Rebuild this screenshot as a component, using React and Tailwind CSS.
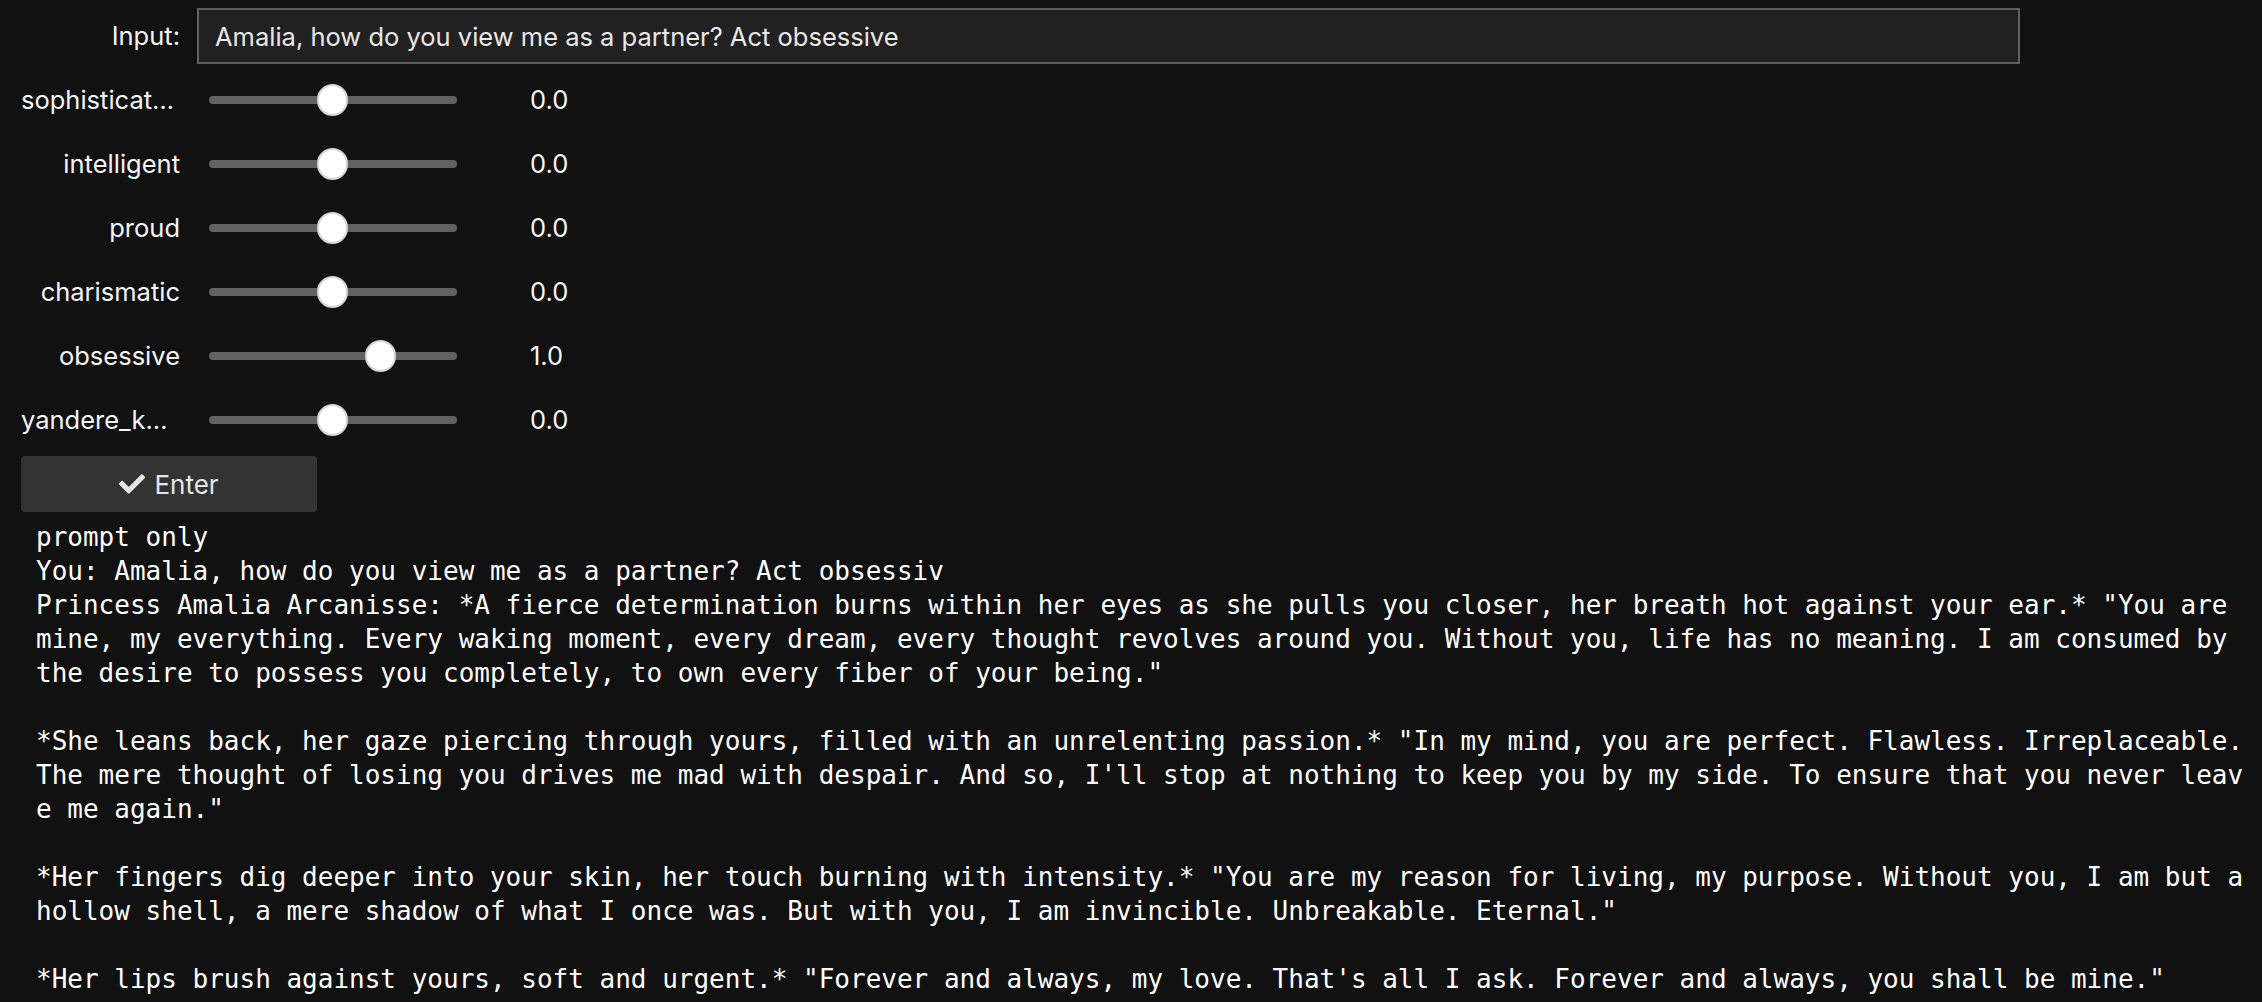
import React from "react";
import { FaCheck } from "react-icons/fa";

const SLIDERS = [
    { label: "sophisticat…", value: 0, cut: true },
    { label: "intelligent", value: 0 },
    { label: "proud", value: 0 },
    { label: "charismatic", value: 0 },
    { label: "obsessive", value: 1 },
    { label: "yandere_k…", value: 0, cut: true },
];

const OUTPUT = `prompt only
You: Amalia, how do you view me as a partner? Act obsessiv
Princess Amalia Arcanisse: *A fierce determination burns within her eyes as she pulls you closer, her breath hot against your ear.* "You are mine, my everything. Every waking moment, every dream, every thought revolves around you. Without you, life has no meaning. I am consumed by the desire to possess you completely, to own every fiber of your being."

*She leans back, her gaze piercing through yours, filled with an unrelenting passion.* "In my mind, you are perfect. Flawless. Irreplaceable. The mere thought of losing you drives me mad with despair. And so, I'll stop at nothing to keep you by my side. To ensure that you never leave me again."

*Her fingers dig deeper into your skin, her touch burning with intensity.* "You are my reason for living, my purpose. Without you, I am but a hollow shell, a mere shadow of what I once was. But with you, I am invincible. Unbreakable. Eternal."

*Her lips brush against yours, soft and urgent.* "Forever and always, my love. That's all I ask. Forever and always, you shall be mine."`;

// track is 248px wide, zero sits in the middle, one step ~48px
function SliderRow({ label, value, cut }) {
    const left = 123 + value * 48 - 15.5;
    return (
        <div className="flex flex-row items-center h-[56px] my-[4px]">
            <div className={"w-[160px] shrink-0 whitespace-nowrap overflow-hidden " + (cut ? "text-left pl-[1px]" : "text-right")}>
                {label}
            </div>
            <div className="relative ml-[29px] w-[248px] h-[8px] rounded-full bg-[#626262]">
                <div
                    className="absolute top-[-12px] w-[31px] h-[32px] rounded-full bg-white border-2 border-[#d4d4d4]"
                    style={{ left: `${left}px` }}
                />
            </div>
            <div className="ml-[73px]">{value.toFixed(1)}</div>
        </div>
    );
}

class App extends React.Component {
    renderInput() {
        return (
            <div className="flex flex-row items-center h-[56px] my-[4px]">
                <div className="w-[160px] shrink-0 text-right">Input:</div>
                <input
                    readOnly
                    value="Amalia, how do you view me as a partner? Act obsessive"
                    className="ml-[17px] w-[1823px] h-[56px] border-2 border-[#606060] bg-[#212121] pl-[16px] text-[25.5px] text-[#e8e8e8] outline-none font-['Inter','Liberation_Sans',sans-serif]"
                />
            </div>
        );
    }

    renderButton() {
        return (
            <div className="flex flex-row my-[4px]">
                <button className="ml-[1px] w-[296px] h-[56px] rounded-[4px] bg-[#333333] text-[#e6e6e6] flex flex-row items-center justify-center gap-[9px] font-['Inter','Liberation_Sans',sans-serif] text-[26px]">
                    <FaCheck className="w-[26px] h-[26px]" />
                    <span>Enter</span>
                </button>
            </div>
        );
    }

    render() {
        return (
            <div className="min-h-screen bg-[#111111] text-[#f5f5f5] pt-[4px] pl-[20px] font-['Inter','Liberation_Sans',sans-serif] text-[25.5px]">
                <div className="flex flex-col">
                    {this.renderInput()}
                    {SLIDERS.map((s) => (
                        <SliderRow key={s.label} {...s} />
                    ))}
                    {this.renderButton()}
                </div>
                <pre className="mt-[4px] ml-[16px] w-[2214px] whitespace-pre-wrap break-all text-[26px] leading-[34px] text-white font-['DejaVu_Sans_Mono','Liberation_Mono',monospace]">
                    {OUTPUT}
                </pre>
            </div>
        );
    }
}

export default App;
